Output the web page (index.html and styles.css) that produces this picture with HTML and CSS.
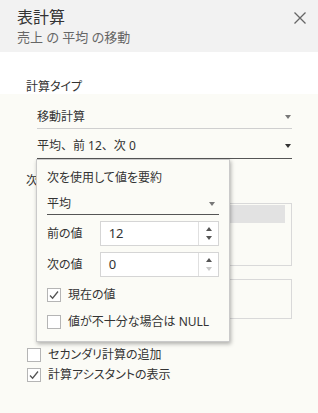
FILE: index.html
```html
<!DOCTYPE html>
<html lang="ja">
<head>
    <meta charset="UTF-8">
    <title>表計算</title>
    <link rel="stylesheet" href="styles.css">
</head>
<body>
    <div class="dialog">
        <!-- Header -->
        <div class="header">
            <div class="title">表計算</div>
            <div class="subtitle">売上 の 平均 の移動</div>
            <svg class="close" width="12" height="12" viewBox="0 0 12 12">
                <path d="M0.5 0.5 L11.5 11.5 M11.5 0.5 L0.5 11.5" stroke="#666" stroke-width="1.3" fill="none"/>
            </svg>
        </div>

        <div class="type-label">計算タイプ</div>

        <!-- Body -->
        <div class="body">
            <div class="select first">
                <span>移動計算</span>
                <span class="arrow light"></span>
            </div>
            <div class="select open">
                <span class="plain">平均、前 12、次 0</span>
                <span class="arrow"></span>
            </div>

            <div class="along-label">次</div>
            <div class="listbox">
                <div class="list-row selected"></div>
            </div>
            <div class="listbox small"></div>

            <label class="check first-check">
                <span class="box"></span>
                <span>セカンダリ計算の追加</span>
            </label>
            <label class="check">
                <span class="box checked">
                    <svg width="12" height="12" viewBox="0 0 12 12"><path d="M2 6.5 L4.6 9.2 L10 2.5" stroke="#555" stroke-width="1.3" fill="none"/></svg>
                </span>
                <span>計算アシスタントの表示</span>
            </label>

            <!-- Popup -->
            <div class="popup">
                <div class="popup-title">次を使用して値を要約</div>
                <div class="select popup-select">
                    <span>平均</span>
                    <span class="arrow light"></span>
                </div>
                <div class="field">
                    <span class="field-label">前の値</span>
                    <div class="spin">
                        <span class="spin-value">12</span>
                        <span class="spin-buttons">
                            <span class="up"></span>
                            <span class="down"></span>
                        </span>
                    </div>
                </div>
                <div class="field">
                    <span class="field-label">次の値</span>
                    <div class="spin">
                        <span class="spin-value">0</span>
                        <span class="spin-buttons">
                            <span class="up"></span>
                            <span class="down disabled"></span>
                        </span>
                    </div>
                </div>
                <label class="check popup-check">
                    <span class="box checked">
                        <svg width="12" height="12" viewBox="0 0 12 12"><path d="M2 6.5 L4.6 9.2 L10 2.5" stroke="#555" stroke-width="1.3" fill="none"/></svg>
                    </span>
                    <span>現在の値</span>
                </label>
                <label class="check popup-check second">
                    <span class="box"></span>
                    <span>値が不十分な場合は NULL</span>
                </label>
            </div>
        </div>
    </div>
</body>
</html>
```

FILE: styles.css
```css
/* Table calculation dialog */
body {
    margin: 0;
    font-family: "Noto Sans", "Noto Sans CJK JP", sans-serif;
    font-feature-settings: "palt";
    font-size: 12px;
    color: #333;
    background: #fbfbf6;
}
.dialog {
    width: 318px;
    height: 413px;
    overflow: hidden;
}
.header {
    position: relative;
    height: 52px;
    box-sizing: border-box;
    padding: 7px 17px 0;
    background: #f2f2f2;
}
.title {
    font-size: 16px;
    line-height: 20px;
    color: #333;
}
.subtitle {
    margin-top: 1px;
    font-size: 13px;
    line-height: 18px;
    color: #666;
}
.close {
    position: absolute;
    right: 12px;
    top: 12px;
}
.type-label {
    height: 15px;
    padding: 27px 26px 0;
    line-height: 15px;
    background: #fff;
}
.body {
    position: relative;
    padding: 0 26px;
    height: 319px;
}
.select {
    display: flex;
    align-items: center;
    justify-content: space-between;
    margin-left: 11px;
    line-height: 16px;
    border-bottom: 1px solid #cfcfcf;
}
.select.first {
    padding: 15px 1px 3px 0;
}
.select.open {
    padding: 9px 1px 4px 0;
    border-bottom-color: #555;
}
.plain {
    font-feature-settings: normal;
}
.arrow {
    width: 0;
    height: 0;
    border-left: 3.5px solid transparent;
    border-right: 3.5px solid transparent;
    border-top: 4px solid #333;
}
.arrow.light {
    border-top-color: #777;
}
.along-label {
    margin-top: 14px;
    line-height: 16px;
}
.listbox {
    margin: 14px 0 0 11px;
    height: 60px;
    border: 1px solid #d9d9d9;
    padding: 1px 6px 0 0;
}
.list-row.selected {
    height: 18px;
    background: #e2e2e2;
}
.listbox.small {
    margin-top: 13px;
    height: 38px;
    padding: 0;
}
.check {
    display: flex;
    align-items: center;
    gap: 7px;
    line-height: 16px;
}
.first-check {
    margin: 28px 0 0 1px;
}
.first-check + .check {
    margin: 4px 0 0 1px;
}
.box {
    width: 12px;
    height: 12px;
    border: 1px solid #b5b5b5;
    background: #fff;
    display: flex;
    align-items: center;
    justify-content: center;
}
.popup {
    position: absolute;
    left: 36px;
    top: 65px;
    width: 172px;
    height: 171px;
    padding: 10px 10px 0;
    border: 1px solid #cacaca;
    background: #fbfbf6;
    box-shadow: 1px 2px 4px rgba(0, 0, 0, 0.3);
}
.popup-title {
    line-height: 16px;
}
.popup-select {
    margin-left: 0;
    padding: 10px 4px 2px 0;
    border-bottom-color: #555;
}
.field {
    display: flex;
    align-items: center;
    margin-top: 6px;
}
.field-label {
    width: 53px;
    line-height: 16px;
}
.spin {
    display: flex;
    width: 118px;
    height: 23px;
    border: 1px solid #d5d5d5;
    background: #fff;
}
.spin-value {
    flex: 1;
    padding-left: 8px;
    line-height: 23px;
    font-size: 13px;
}
.spin-buttons {
    width: 19px;
    border-left: 1px solid #e0e0e0;
    display: flex;
    flex-direction: column;
    align-items: center;
    justify-content: space-around;
    padding: 3px 0;
}
.up, .down {
    width: 0;
    height: 0;
    border-left: 3.5px solid transparent;
    border-right: 3.5px solid transparent;
}
.up {
    border-bottom: 4px solid #555;
}
.down {
    border-top: 4px solid #555;
}
.down.disabled {
    border-top-color: #c8c8c8;
}
.popup-check {
    margin-top: 10px;
}
.popup-check.second {
    margin-top: 11px;
}
```
